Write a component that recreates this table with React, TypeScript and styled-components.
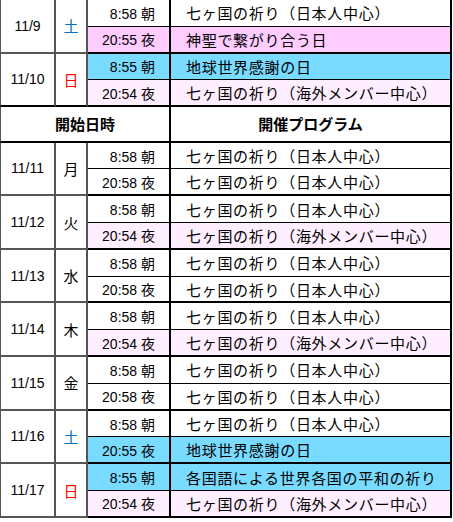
import React from 'react';
import styled, {createGlobalStyle} from 'styled-components';

type Tone = 'plain' | 'pink' | 'blue' | 'soft';

const tones: Record<Tone, string> = {
	plain: '#ffffff',
	pink: '#ffccff',
	blue: '#78dbff',
	soft: '#ffeeff',
};

const GRAY = '#555555';
const ROW_H = 26.8;

const GlobalStyle = createGlobalStyle`
	html, body {
		margin: 0;
		padding: 0;
		background: #ffffff;
	}
	body {
		font-family: "Liberation Sans", "Noto Sans CJK JP", sans-serif;
		color: #000000;
	}
`;

const Table = styled.table`
	border-collapse: separate;
	border-spacing: 0;
	width: 452px;
	table-layout: fixed;
	font-family: "Liberation Sans", "Noto Sans CJK JP", sans-serif;
`;

const Row = styled.tr`
	height: ${ROW_H}px;
`;

const HeaderRow = styled.tr`
	height: 35.5px;
`;

// date and day columns use grey rules, the program side uses black
const DateCell = styled.td<{$closing?: boolean}>`
	width: 53px;
	padding: 0;
	text-align: center;
	font-size: 14px;
	border-left: 1px solid ${GRAY};
	border-right: 2px solid ${GRAY};
	border-bottom: 2px solid ${p => (p.$closing ? '#000' : GRAY)};
`;

const DayCell = styled.td<{$color: string; $closing?: boolean}>`
	width: 30px;
	padding: 0;
	text-align: center;
	font-size: 15px;
	color: ${p => p.$color};
	border-right: 2px solid ${GRAY};
	border-bottom: 2px solid ${p => (p.$closing ? '#000' : GRAY)};
`;

const TimeCell = styled.td<{$tone: Tone; $last?: boolean}>`
	width: 67px;
	padding: 0 14px 0 0;
	text-align: right;
	font-size: 14px;
	white-space: nowrap;
	background: ${p => tones[p.$tone]};
	border-right: 2px solid #000;
	border-bottom: ${p => (p.$last ? 2 : 1)}px solid #000;
`;

const ProgramCell = styled.td<{$tone: Tone; $last?: boolean}>`
	padding: 0 0 0 15px;
	text-align: left;
	font-size: 15px;
	letter-spacing: 0.7px;
	white-space: nowrap;
	background: ${p => tones[p.$tone]};
	border-right: 2px solid #000;
	border-bottom: ${p => (p.$last ? 2 : 1)}px solid #000;
`;

const HeaderCell = styled.th<{$first?: boolean}>`
	padding: 0;
	text-align: center;
	font-size: 15px;
	font-weight: bold;
	border-left: ${p => (p.$first ? '1px solid ' + GRAY : 'none')};
	border-right: 2px solid #000;
	border-bottom: 2px solid #000;
`;

type Slot = {time: string; title: string; tone: Tone};
type Day = {date: string; day: string; color: string; slots: [Slot, Slot]};

const JP = '七ヶ国の祈り（日本人中心）';
const OVERSEAS = '七ヶ国の祈り（海外メンバー中心）';
const THANKS = '地球世界感謝の日';

const BLUE = '#0070c0';
const RED = '#ff0000';
const BLACK = '#000000';

const before: Day[] = [
	{date: '11/9', day: '土', color: BLUE, slots: [
		{time: '8:58 朝', title: JP, tone: 'plain'},
		{time: '20:55 夜', title: '神聖で繋がり合う日', tone: 'pink'},
	]},
	{date: '11/10', day: '日', color: RED, slots: [
		{time: '8:55 朝', title: THANKS, tone: 'blue'},
		{time: '20:54 夜', title: OVERSEAS, tone: 'soft'},
	]},
];

const after: Day[] = [
	{date: '11/11', day: '月', color: BLACK, slots: [
		{time: '8:58 朝', title: JP, tone: 'plain'},
		{time: '20:58 夜', title: JP, tone: 'plain'},
	]},
	{date: '11/12', day: '火', color: BLACK, slots: [
		{time: '8:58 朝', title: JP, tone: 'plain'},
		{time: '20:54 夜', title: OVERSEAS, tone: 'soft'},
	]},
	{date: '11/13', day: '水', color: BLACK, slots: [
		{time: '8:58 朝', title: JP, tone: 'plain'},
		{time: '20:58 夜', title: JP, tone: 'plain'},
	]},
	{date: '11/14', day: '木', color: BLACK, slots: [
		{time: '8:58 朝', title: JP, tone: 'plain'},
		{time: '20:54 夜', title: OVERSEAS, tone: 'soft'},
	]},
	{date: '11/15', day: '金', color: BLACK, slots: [
		{time: '8:58 朝', title: JP, tone: 'plain'},
		{time: '20:58 夜', title: JP, tone: 'plain'},
	]},
	{date: '11/16', day: '土', color: BLUE, slots: [
		{time: '8:58 朝', title: JP, tone: 'plain'},
		{time: '20:55 夜', title: THANKS, tone: 'blue'},
	]},
	{date: '11/17', day: '日', color: RED, slots: [
		{time: '8:55 朝', title: '各国語による世界各国の平和の祈り', tone: 'blue'},
		{time: '20:54 夜', title: OVERSEAS, tone: 'soft'},
	]},
];

const DayRows = ({d, closing}: {d: Day; closing?: boolean}) => (
	<>
		<Row>
			<DateCell rowSpan={2} $closing={closing}>{d.date}</DateCell>
			<DayCell rowSpan={2} $color={d.color} $closing={closing}>{d.day}</DayCell>
			<TimeCell $tone={d.slots[0].tone}>{d.slots[0].time}</TimeCell>
			<ProgramCell $tone={d.slots[0].tone}>{d.slots[0].title}</ProgramCell>
		</Row>
		<Row>
			<TimeCell $tone={d.slots[1].tone} $last>{d.slots[1].time}</TimeCell>
			<ProgramCell $tone={d.slots[1].tone} $last>{d.slots[1].title}</ProgramCell>
		</Row>
	</>
);

export default function App() {
	return (
		<>
			<GlobalStyle />
			<Table>
				<colgroup>
					<col style={{width: 56}} />
					<col style={{width: 32}} />
					<col style={{width: 83}} />
					<col />
				</colgroup>
				<tbody>
					{before.map((d, i) => (
						<DayRows key={d.date} d={d} closing={i === before.length - 1} />
					))}
					<HeaderRow>
						<HeaderCell colSpan={3} $first>開始日時</HeaderCell>
						<HeaderCell>開催プログラム</HeaderCell>
					</HeaderRow>
					{after.map(d => (
						<DayRows key={d.date} d={d} />
					))}
				</tbody>
			</Table>
		</>
	);
}
